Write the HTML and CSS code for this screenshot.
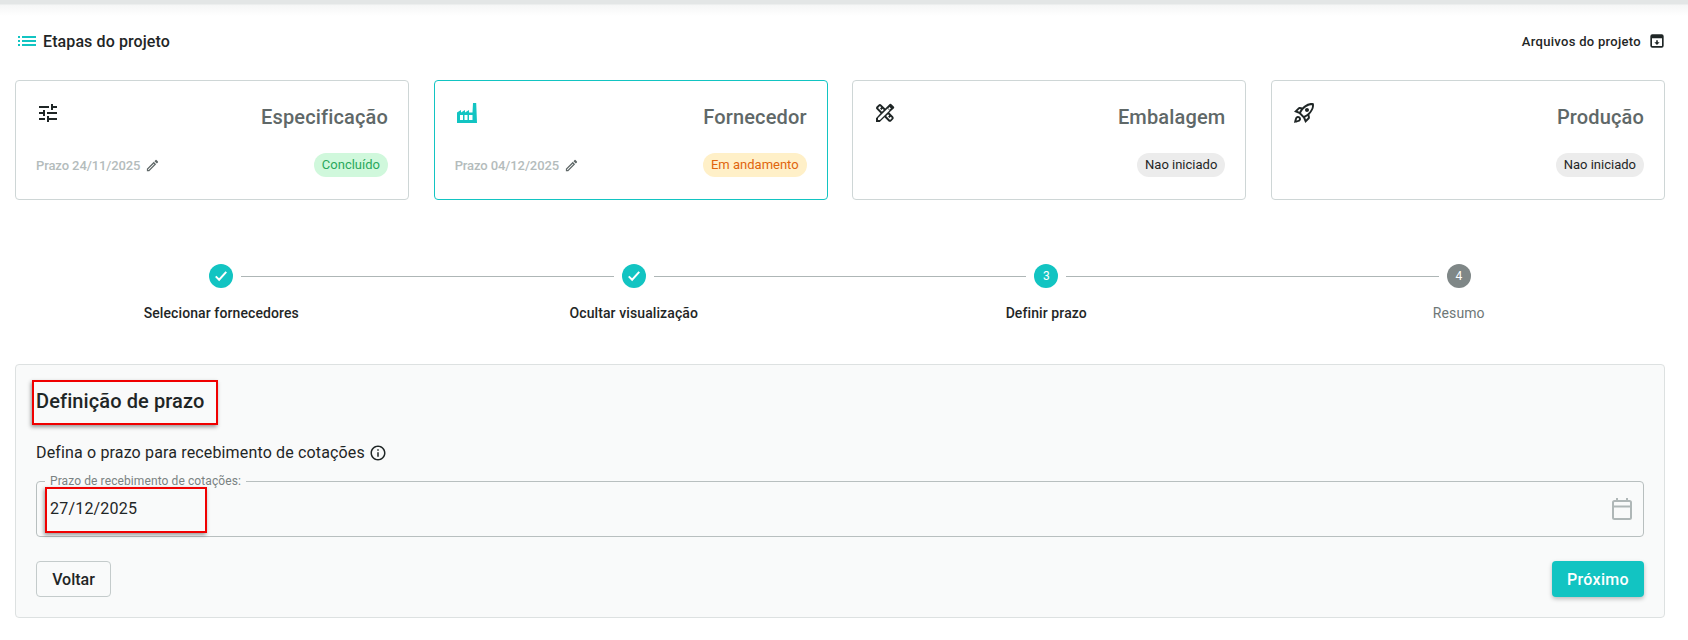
FILE: index.html
```html
<!DOCTYPE html>
<html>
<head>
	<meta charset="utf-8">
	<title>Etapas do projeto</title>
	<link rel="stylesheet" href="styles.css">
</head>
<body>
	<div class="topbar"></div>
	<div class="page">
		<div class="page-head">
			<div class="page-title">
				<svg class="icon-list" viewBox="0 0 24 24"><path d="M3 13h2v-2H3v2zm0 4h2v-2H3v2zm0-8h2V7H3v2zm4 4h14v-2H7v2zm0 4h14v-2H7v2zM7 7v2h14V7H7z"/></svg>
				<span>Etapas do projeto</span>
			</div>
			<div class="files">
				<span>Arquivos do projeto</span>
				<svg class="icon-files" viewBox="0 0 24 24"><path fill-rule="evenodd" d="M2 5a3 3 0 0 1 3-3h14a3 3 0 0 1 3 3v14a3 3 0 0 1-3 3H5a3 3 0 0 1-3-3zM4.500 8V19a.5.5 0 0 0 .5.5h14a.5.5 0 0 0 .5-.5V8zM12 18l-4-4h2.800v-3h2.400v3H16z"/></svg>
			</div>
		</div>

		<div class="cards">
			<div class="card">
				<div class="card-top">
					<svg class="card-icon" viewBox="0 0 24 24"><path d="M3 17v2h6v-2H3zM3 5v2h10V5H3zm10 16v-2h8v-2h-8v-2h-2v6h2zM7 9v2H3v2h4v2h2V9H7zm14 4v-2H11v2h10zm-6-4h2V7h4V5h-4V3h-2v6z"/></svg>
					<div class="card-title">Especificação</div>
				</div>
				<div class="card-bottom">
					<div class="deadline">Prazo 24/11/2025
						<svg class="icon-edit" viewBox="0 0 24 24"><path d="M3 17.250V21h3.750L17.810 9.940l-3.750-3.750L3 17.250zM5.920 19H5v-.92l9.060-9.060.92.92L5.920 19zM20.710 5.630l-2.340-2.340a.996.996 0 0 0-1.410 0l-1.830 1.830 3.750 3.750 1.830-1.830c.39-.39.39-1.020 0-1.410z"/></svg>
					</div>
					<span class="badge badge-done">Concluído</span>
				</div>
			</div>

			<div class="card card-active">
				<div class="card-top">
					<svg class="card-icon icon-teal" viewBox="0 0 24 24"><path fill-rule="evenodd" d="M2 22V11.500l4-2.500v2.500l4-2.500v2.500l4-2.500v2.500h3.500L18 2h3.200L22 22zM5 14h3v5H5zM9.500 14h3v5h-3zM14 14h3.500v5H14z"/></svg>
					<div class="card-title">Fornecedor</div>
				</div>
				<div class="card-bottom">
					<div class="deadline">Prazo 04/12/2025
						<svg class="icon-edit" viewBox="0 0 24 24"><path d="M3 17.250V21h3.750L17.810 9.940l-3.750-3.750L3 17.250zM5.920 19H5v-.92l9.060-9.060.92.92L5.920 19zM20.710 5.630l-2.340-2.340a.996.996 0 0 0-1.410 0l-1.830 1.830 3.750 3.750 1.830-1.830c.39-.39.39-1.020 0-1.410z"/></svg>
					</div>
					<span class="badge badge-progress">Em andamento</span>
				</div>
			</div>

			<div class="card">
				<div class="card-top">
					<svg class="card-icon" viewBox="0 0 24 24"><path d="M20.970 7.270c.39-.39.39-1.020 0-1.410l-2.830-2.830a.9959.9959 0 0 0-1.410 0l-4.490 4.490-3.890-3.890c-.78-.78-2.050-.78-2.830 0l-1.900 1.900c-.78.78-.78 2.050 0 2.830l3.890 3.890L3 17.250V21h3.750l4.760-4.760 3.890 3.890c.95.95 2.230.6 2.830 0l1.900-1.900c.78-.78.78-2.050 0-2.830l-3.890-3.890 4.730-4.240zM5.040 6.940l1.890-1.900L8.200 6.310 7.020 7.500l1.410 1.410 1.190-1.190 1.200 1.200-1.900 1.900-3.880-3.880zm11.230 7.440-1.190 1.190 1.410 1.410 1.190-1.190 1.270 1.270-1.900 1.900-3.890-3.890 1.900-1.900 1.210 1.210zM6.920 19H5v-1.920l9.610-9.610 1.920 1.920L6.920 19zm9.610-12.970 1.410 1.410-1.410 1.410-1.410-1.410 1.410-1.410z"/></svg>
					<div class="card-title">Embalagem</div>
				</div>
				<div class="card-bottom card-bottom-end">
					<span class="badge badge-idle">Nao iniciado</span>
				</div>
			</div>

			<div class="card">
				<div class="card-top">
					<svg class="card-icon" viewBox="0 0 24 24"><path d="M6 15c-.83 0-1.580.34-2.120.88C2.700 17.060 2 22 2 22s4.940-.7 6.120-1.880A2.996 2.996 0 0 0 6 15zm.71 3.710c-.28.28-2.170.76-2.170.76s.47-1.880.76-2.170c.17-.19.42-.3.7-.3.55 0 1 .45 1 1 0 .28-.11.53-.29.71zm10.710-5.060c6.360-6.360 4.240-11.310 4.240-11.310S16.710.22 10.350 6.580l-2.490-.5a2.030 2.030 0 0 0-1.810.55L2 10.690l5 2.140L11.170 17l2.140 5 4.050-4.050c.47-.47.68-1.150.55-1.810l-.49-2.490zM7.410 10.830l-1.910-.82 1.970-1.970 1.440.29c-.57.83-1.080 1.700-1.500 2.500zm6.580 7.670-.82-1.910c.8-.42 1.670-.93 2.490-1.500l.29 1.440-1.960 1.970zM16 12.240c-1.320 1.320-3.380 2.400-4.040 2.730l-2.930-2.930c.32-.65 1.400-2.710 2.730-4.040 4.680-4.680 8.230-3.760 8.230-3.760s.92 3.550-3.990 8zM15 11c1.100 0 2-.9 2-2s-.9-2-2-2-2 .9-2 2 .9 2 2 2z"/></svg>
					<div class="card-title">Produção</div>
				</div>
				<div class="card-bottom card-bottom-end">
					<span class="badge badge-idle">Nao iniciado</span>
				</div>
			</div>
		</div>

		<div class="stepper">
			<div class="step">
				<div class="step-dot">
					<svg class="icon-check" viewBox="0 0 24 24"><path d="M5 12.500l4.500 4.500 9.500-10.500"/></svg>
				</div>
				<div class="step-label">Selecionar fornecedores</div>
			</div>
			<div class="step">
				<div class="step-line"></div>
				<div class="step-dot">
					<svg class="icon-check" viewBox="0 0 24 24"><path d="M5 12.500l4.500 4.500 9.500-10.500"/></svg>
				</div>
				<div class="step-label">Ocultar visualização</div>
			</div>
			<div class="step">
				<div class="step-line"></div>
				<div class="step-dot">3</div>
				<div class="step-label">Definir prazo</div>
			</div>
			<div class="step step-todo">
				<div class="step-line"></div>
				<div class="step-dot">4</div>
				<div class="step-label">Resumo</div>
			</div>
		</div>

		<div class="panel">
			<h2 class="panel-title">Definição de prazo</h2>
			<div class="panel-text">Defina o prazo para recebimento de cotações
				<svg class="icon-info" viewBox="0 0 24 24"><path d="M11 7h2v2h-2zm0 4h2v6h-2zm1-9C6.480 2 2 6.480 2 12s4.480 10 10 10 10-4.480 10-10S17.520 2 12 2zm0 18c-4.410 0-8-3.590-8-8s3.590-8 8-8 8 3.590 8 8-3.590 8-8 8z"/></svg>
			</div>
			<fieldset class="date-field">
				<legend>Prazo de recebimento de cotações:</legend>
				<span class="date-value">27/12/2025</span>
				<svg class="icon-calendar" viewBox="0 0 22 24"><rect x="2" y="4" width="18" height="18" rx="1.500"/><path d="M2 9.500h18M6 1v3M16 1v3"/></svg>
			</fieldset>
			<div class="panel-actions">
				<button class="btn btn-back">Voltar</button>
				<button class="btn btn-next">Próximo</button>
			</div>

			<!-- red annotation boxes drawn on the screenshot -->
			<div class="mark mark-title"></div>
			<div class="mark mark-date"></div>
		</div>
	</div>
</body>
</html>
```

FILE: styles.css
```css
* {
	box-sizing: border-box;
}

body {
	margin: 0;
	background-color: #ffffff;
	color: #1f2626;
	font-family: Roboto, "Liberation Sans", sans-serif;
}

.topbar {
	height: 16px;
	background: linear-gradient(#e3e6e6 0, #e3e6e6 4px, #f5f6f6 5px, #ffffff 16px);
}

.page {
	padding: 0 23px 0 15px;
}

.page-head {
	display: flex;
	justify-content: space-between;
	align-items: center;
	height: 50px;
}

.page-title {
	display: flex;
	align-items: center;
	gap: 4px;
	font-size: 16px;
	font-weight: 500;
	letter-spacing: 0.1px;
}

.icon-list {
	width: 24px;
	height: 24px;
	fill: #12c4c2;
}

.files {
	display: flex;
	align-items: center;
	gap: 8px;
	font-size: 13px;
	font-weight: 500;
	letter-spacing: 0.3px;
}

.icon-files {
	width: 16px;
	height: 16px;
	fill: #1f2626;
}

.cards {
	display: grid;
	grid-template-columns: repeat(4, 1fr);
	gap: 24.67px;
	margin-top: 14px;
}

.card {
	height: 120px;
	padding: 20px 20px 0 20px;
	background-color: #ffffff;
	border: 1px solid #ced6d6;
	border-radius: 4px;
}

.card-active {
	border-color: #12c4c2;
}

.card-top {
	display: flex;
	justify-content: space-between;
	height: 52px;
}

.card-icon {
	width: 24px;
	height: 24px;
	fill: #1f2626;
}

.icon-teal {
	fill: #12c4c2;
}

.card-title {
	margin-top: 4px;
	font-size: 20px;
	font-weight: 500;
	letter-spacing: 0.15px;
	color: #5f6868;
}

.card-bottom {
	display: flex;
	justify-content: space-between;
	align-items: center;
}

.card-bottom-end {
	justify-content: flex-end;
}

.deadline {
	display: flex;
	align-items: center;
	gap: 5px;
	font-size: 13px;
	font-weight: 500;
	letter-spacing: -0.1px;
	color: #b4bcbc;
}

.icon-edit {
	width: 15px;
	height: 15px;
	fill: #5f6868;
}

.badge {
	height: 24px;
	padding: 0 8px;
	border-radius: 12px;
	font-size: 13px;
	line-height: 24px;
}

.badge-done {
	background-color: #d0f8dc;
	color: #2aa85c;
}

.badge-progress {
	background-color: #fff0c8;
	color: #e0650c;
}

.badge-idle {
	background-color: #ececec;
	color: #1f2626;
}

.stepper {
	display: grid;
	grid-template-columns: repeat(4, 1fr);
	margin-top: 64px;
	height: 100px;
}

.step {
	position: relative;
	display: flex;
	flex-direction: column;
	align-items: center;
}

.step-line {
	position: absolute;
	top: 12px;
	left: calc(-50% + 20px);
	right: calc(50% + 20px);
	border-top: 1px solid #aeb6b6;
}

.step-dot {
	display: flex;
	align-items: center;
	justify-content: center;
	width: 24px;
	height: 24px;
	border-radius: 50%;
	background-color: #12c4c2;
	color: #ffffff;
	font-size: 12px;
}

.step-todo .step-dot {
	background-color: #7f8787;
}

.icon-check {
	width: 18px;
	height: 18px;
	fill: none;
	stroke: #ffffff;
	stroke-width: 2.6;
}

.step-label {
	margin-top: 17px;
	font-size: 14px;
	font-weight: 500;
	letter-spacing: 0.1px;
}

.step-todo .step-label {
	font-weight: 400;
	color: #6e7777;
}

.panel {
	position: relative;
	height: 254px;
	padding: 0 20px;
	background-color: #f9fafa;
	border: 1px solid #dde1e1;
	border-radius: 4px;
}

.panel-title {
	margin: 24px 0 0 0;
	font-size: 20px;
	font-weight: 500;
	line-height: 24px;
	letter-spacing: 0.1px;
}

.panel-text {
	display: flex;
	align-items: center;
	gap: 4px;
	margin-top: 30px;
	font-size: 16px;
	letter-spacing: 0.15px;
}

.icon-info {
	width: 18px;
	height: 18px;
	fill: #1f2626;
}

.date-field {
	display: flex;
	align-items: center;
	justify-content: space-between;
	height: 62px;
	margin: 13px 0 0 0;
	padding: 0 10px 6px 13px;
	border: 1px solid #b8bfbf;
	border-radius: 4px;
}

.date-field legend {
	padding: 0 5px;
	margin-left: -5px;
	font-size: 12px;
	line-height: 12px;
	letter-spacing: 0.1px;
	color: #7a8282;
}

.date-value {
	font-size: 16px;
	letter-spacing: 0.2px;
}

.icon-calendar {
	width: 22px;
	height: 24px;
	fill: none;
	stroke: #afb7b7;
	stroke-width: 2;
}

.panel-actions {
	display: flex;
	justify-content: space-between;
	margin-top: 24px;
}

.btn {
	height: 36px;
	border-radius: 4px;
	font-family: Roboto, "Liberation Sans", sans-serif;
	font-size: 16px;
	font-weight: 500;
}

.btn-back {
	width: 75px;
	background-color: transparent;
	border: 1px solid #c4cbcb;
	color: #1f2626;
}

.btn-next {
	width: 92px;
	background-color: #12c4c2;
	border: none;
	color: #ffffff;
	letter-spacing: 0.3px;
	box-shadow: 0 2px 4px rgba(0, 0, 0, 0.25);
}

.mark {
	position: absolute;
	border: 2px solid #f00000;
	box-shadow: -1px 2px 4px rgba(0, 0, 0, 0.4);
}

.mark-title {
	top: 15px;
	left: 16px;
	width: 186px;
	height: 45px;
}

.mark-date {
	top: 122px;
	left: 29px;
	width: 162px;
	height: 46px;
}
```
